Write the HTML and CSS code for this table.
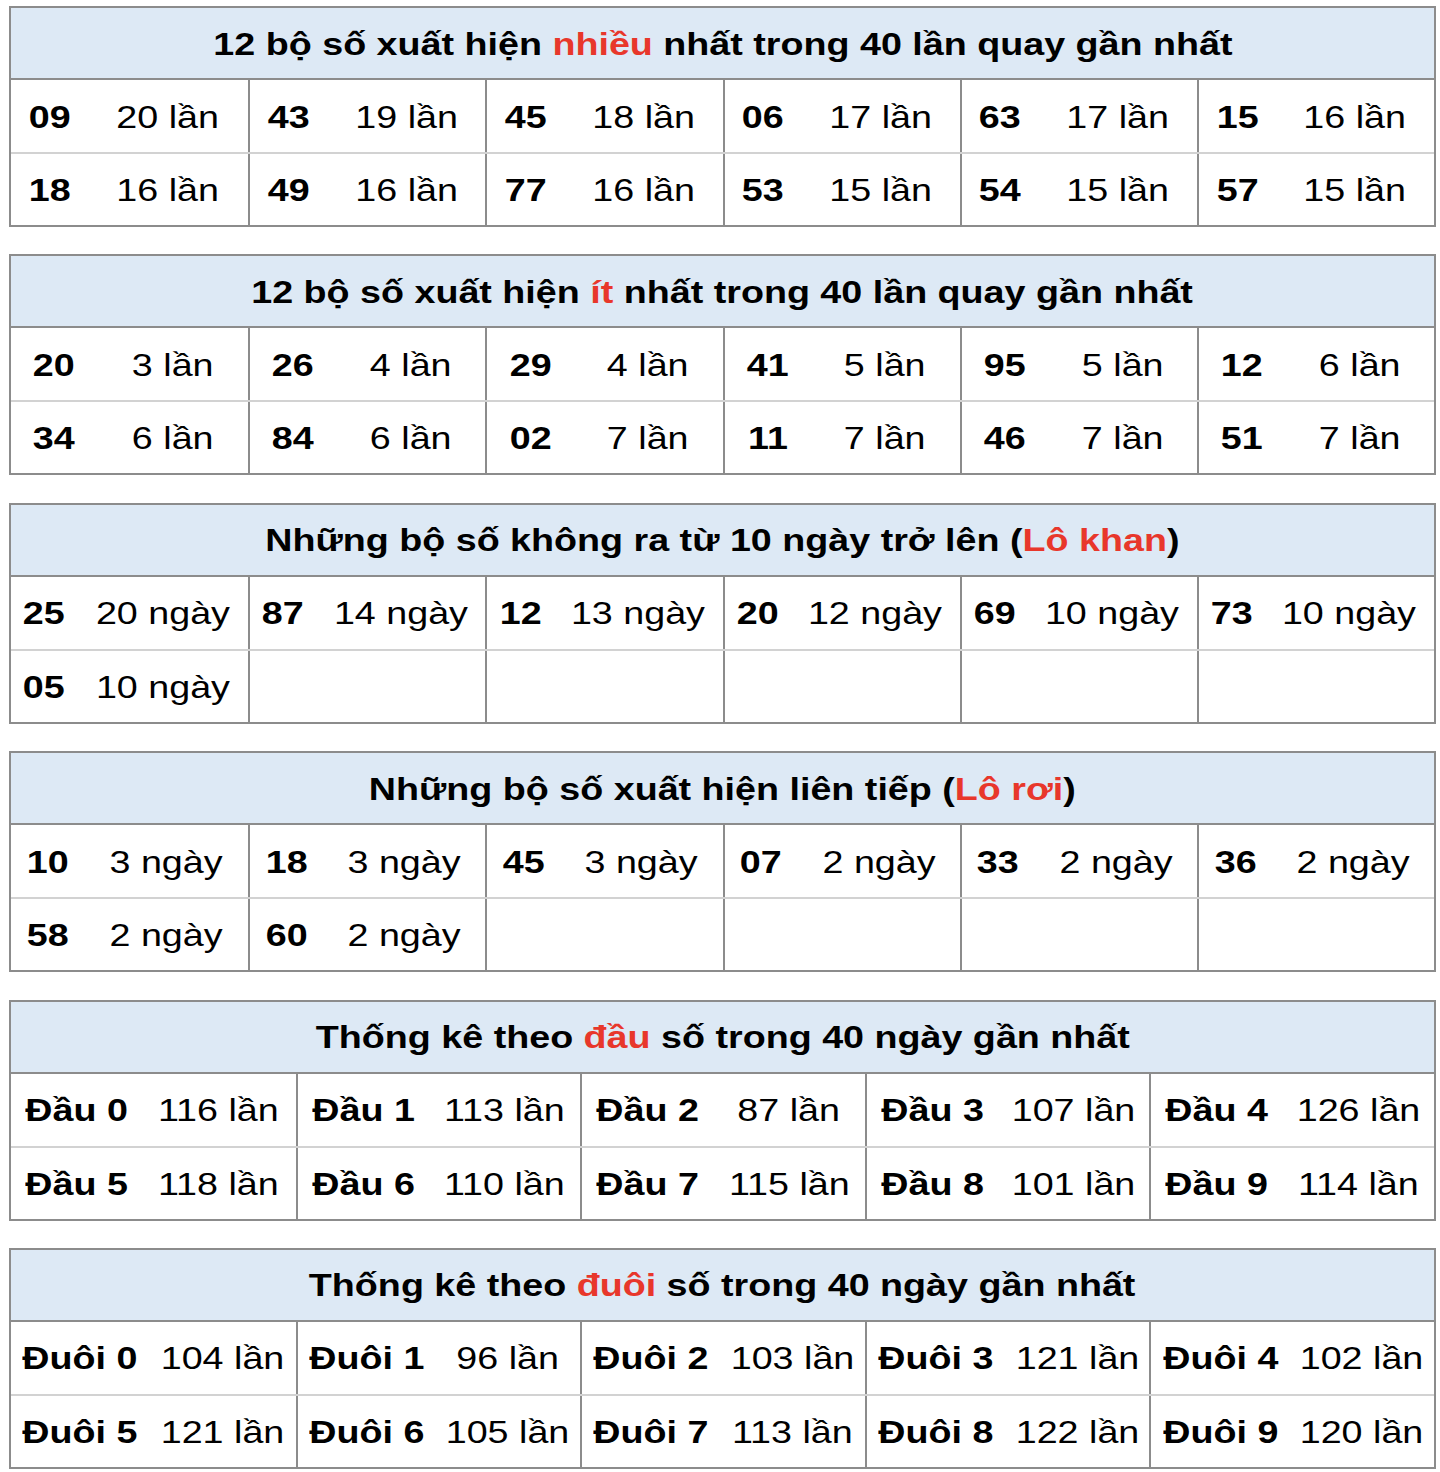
FILE: index.html
```html
<!DOCTYPE html>
<html lang="vi">
<head>
<meta charset="utf-8">
<title>Thống kê lô tô</title>
<link rel="stylesheet" href="styles.css">
</head>
<body>

<section class="stat stat--most">
  <div class="stat-head"><span class="txt">12 bộ số xuất hiện <b class="hl">nhiều</b> nhất trong 40 lần quay gần nhất</span></div>
  <div class="stat-row">
    <div class="pair"><div class="num"><span class="txt">09</span></div><div class="cnt"><span class="txt">20 lần</span></div></div>
    <div class="pair"><div class="num"><span class="txt">43</span></div><div class="cnt"><span class="txt">19 lần</span></div></div>
    <div class="pair"><div class="num"><span class="txt">45</span></div><div class="cnt"><span class="txt">18 lần</span></div></div>
    <div class="pair"><div class="num"><span class="txt">06</span></div><div class="cnt"><span class="txt">17 lần</span></div></div>
    <div class="pair"><div class="num"><span class="txt">63</span></div><div class="cnt"><span class="txt">17 lần</span></div></div>
    <div class="pair"><div class="num"><span class="txt">15</span></div><div class="cnt"><span class="txt">16 lần</span></div></div>
  </div>
  <div class="stat-row">
    <div class="pair"><div class="num"><span class="txt">18</span></div><div class="cnt"><span class="txt">16 lần</span></div></div>
    <div class="pair"><div class="num"><span class="txt">49</span></div><div class="cnt"><span class="txt">16 lần</span></div></div>
    <div class="pair"><div class="num"><span class="txt">77</span></div><div class="cnt"><span class="txt">16 lần</span></div></div>
    <div class="pair"><div class="num"><span class="txt">53</span></div><div class="cnt"><span class="txt">15 lần</span></div></div>
    <div class="pair"><div class="num"><span class="txt">54</span></div><div class="cnt"><span class="txt">15 lần</span></div></div>
    <div class="pair"><div class="num"><span class="txt">57</span></div><div class="cnt"><span class="txt">15 lần</span></div></div>
  </div>
</section>

<section class="stat stat--least">
  <div class="stat-head"><span class="txt">12 bộ số xuất hiện <b class="hl">ít</b> nhất trong 40 lần quay gần nhất</span></div>
  <div class="stat-row">
    <div class="pair"><div class="num"><span class="txt">20</span></div><div class="cnt"><span class="txt">3 lần</span></div></div>
    <div class="pair"><div class="num"><span class="txt">26</span></div><div class="cnt"><span class="txt">4 lần</span></div></div>
    <div class="pair"><div class="num"><span class="txt">29</span></div><div class="cnt"><span class="txt">4 lần</span></div></div>
    <div class="pair"><div class="num"><span class="txt">41</span></div><div class="cnt"><span class="txt">5 lần</span></div></div>
    <div class="pair"><div class="num"><span class="txt">95</span></div><div class="cnt"><span class="txt">5 lần</span></div></div>
    <div class="pair"><div class="num"><span class="txt">12</span></div><div class="cnt"><span class="txt">6 lần</span></div></div>
  </div>
  <div class="stat-row">
    <div class="pair"><div class="num"><span class="txt">34</span></div><div class="cnt"><span class="txt">6 lần</span></div></div>
    <div class="pair"><div class="num"><span class="txt">84</span></div><div class="cnt"><span class="txt">6 lần</span></div></div>
    <div class="pair"><div class="num"><span class="txt">02</span></div><div class="cnt"><span class="txt">7 lần</span></div></div>
    <div class="pair"><div class="num"><span class="txt">11</span></div><div class="cnt"><span class="txt">7 lần</span></div></div>
    <div class="pair"><div class="num"><span class="txt">46</span></div><div class="cnt"><span class="txt">7 lần</span></div></div>
    <div class="pair"><div class="num"><span class="txt">51</span></div><div class="cnt"><span class="txt">7 lần</span></div></div>
  </div>
</section>

<section class="stat stat--khan">
  <div class="stat-head"><span class="txt">Những bộ số không ra từ 10 ngày trở lên (<b class="hl">Lô khan</b>)</span></div>
  <div class="stat-row">
    <div class="pair"><div class="num"><span class="txt">25</span></div><div class="cnt"><span class="txt">20 ngày</span></div></div>
    <div class="pair"><div class="num"><span class="txt">87</span></div><div class="cnt"><span class="txt">14 ngày</span></div></div>
    <div class="pair"><div class="num"><span class="txt">12</span></div><div class="cnt"><span class="txt">13 ngày</span></div></div>
    <div class="pair"><div class="num"><span class="txt">20</span></div><div class="cnt"><span class="txt">12 ngày</span></div></div>
    <div class="pair"><div class="num"><span class="txt">69</span></div><div class="cnt"><span class="txt">10 ngày</span></div></div>
    <div class="pair"><div class="num"><span class="txt">73</span></div><div class="cnt"><span class="txt">10 ngày</span></div></div>
  </div>
  <div class="stat-row">
    <div class="pair"><div class="num"><span class="txt">05</span></div><div class="cnt"><span class="txt">10 ngày</span></div></div>
    <div class="pair"><div class="num"></div><div class="cnt"></div></div>
    <div class="pair"><div class="num"></div><div class="cnt"></div></div>
    <div class="pair"><div class="num"></div><div class="cnt"></div></div>
    <div class="pair"><div class="num"></div><div class="cnt"></div></div>
    <div class="pair"><div class="num"></div><div class="cnt"></div></div>
  </div>
</section>

<section class="stat stat--roi">
  <div class="stat-head"><span class="txt">Những bộ số xuất hiện liên tiếp (<b class="hl">Lô rơi</b>)</span></div>
  <div class="stat-row">
    <div class="pair"><div class="num"><span class="txt">10</span></div><div class="cnt"><span class="txt">3 ngày</span></div></div>
    <div class="pair"><div class="num"><span class="txt">18</span></div><div class="cnt"><span class="txt">3 ngày</span></div></div>
    <div class="pair"><div class="num"><span class="txt">45</span></div><div class="cnt"><span class="txt">3 ngày</span></div></div>
    <div class="pair"><div class="num"><span class="txt">07</span></div><div class="cnt"><span class="txt">2 ngày</span></div></div>
    <div class="pair"><div class="num"><span class="txt">33</span></div><div class="cnt"><span class="txt">2 ngày</span></div></div>
    <div class="pair"><div class="num"><span class="txt">36</span></div><div class="cnt"><span class="txt">2 ngày</span></div></div>
  </div>
  <div class="stat-row">
    <div class="pair"><div class="num"><span class="txt">58</span></div><div class="cnt"><span class="txt">2 ngày</span></div></div>
    <div class="pair"><div class="num"><span class="txt">60</span></div><div class="cnt"><span class="txt">2 ngày</span></div></div>
    <div class="pair"><div class="num"></div><div class="cnt"></div></div>
    <div class="pair"><div class="num"></div><div class="cnt"></div></div>
    <div class="pair"><div class="num"></div><div class="cnt"></div></div>
    <div class="pair"><div class="num"></div><div class="cnt"></div></div>
  </div>
</section>

<section class="stat stat--dau">
  <div class="stat-head"><span class="txt">Thống kê theo <b class="hl">đầu</b> số trong 40 ngày gần nhất</span></div>
  <div class="stat-row">
    <div class="pair"><div class="num"><span class="txt">Đầu 0</span></div><div class="cnt"><span class="txt">116 lần</span></div></div>
    <div class="pair"><div class="num"><span class="txt">Đầu 1</span></div><div class="cnt"><span class="txt">113 lần</span></div></div>
    <div class="pair"><div class="num"><span class="txt">Đầu 2</span></div><div class="cnt"><span class="txt">87 lần</span></div></div>
    <div class="pair"><div class="num"><span class="txt">Đầu 3</span></div><div class="cnt"><span class="txt">107 lần</span></div></div>
    <div class="pair"><div class="num"><span class="txt">Đầu 4</span></div><div class="cnt"><span class="txt">126 lần</span></div></div>
  </div>
  <div class="stat-row">
    <div class="pair"><div class="num"><span class="txt">Đầu 5</span></div><div class="cnt"><span class="txt">118 lần</span></div></div>
    <div class="pair"><div class="num"><span class="txt">Đầu 6</span></div><div class="cnt"><span class="txt">110 lần</span></div></div>
    <div class="pair"><div class="num"><span class="txt">Đầu 7</span></div><div class="cnt"><span class="txt">115 lần</span></div></div>
    <div class="pair"><div class="num"><span class="txt">Đầu 8</span></div><div class="cnt"><span class="txt">101 lần</span></div></div>
    <div class="pair"><div class="num"><span class="txt">Đầu 9</span></div><div class="cnt"><span class="txt">114 lần</span></div></div>
  </div>
</section>

<section class="stat stat--duoi">
  <div class="stat-head"><span class="txt">Thống kê theo <b class="hl">đuôi</b> số trong 40 ngày gần nhất</span></div>
  <div class="stat-row">
    <div class="pair"><div class="num"><span class="txt">Đuôi 0</span></div><div class="cnt"><span class="txt">104 lần</span></div></div>
    <div class="pair"><div class="num"><span class="txt">Đuôi 1</span></div><div class="cnt"><span class="txt">96 lần</span></div></div>
    <div class="pair"><div class="num"><span class="txt">Đuôi 2</span></div><div class="cnt"><span class="txt">103 lần</span></div></div>
    <div class="pair"><div class="num"><span class="txt">Đuôi 3</span></div><div class="cnt"><span class="txt">121 lần</span></div></div>
    <div class="pair"><div class="num"><span class="txt">Đuôi 4</span></div><div class="cnt"><span class="txt">102 lần</span></div></div>
  </div>
  <div class="stat-row">
    <div class="pair"><div class="num"><span class="txt">Đuôi 5</span></div><div class="cnt"><span class="txt">121 lần</span></div></div>
    <div class="pair"><div class="num"><span class="txt">Đuôi 6</span></div><div class="cnt"><span class="txt">105 lần</span></div></div>
    <div class="pair"><div class="num"><span class="txt">Đuôi 7</span></div><div class="cnt"><span class="txt">113 lần</span></div></div>
    <div class="pair"><div class="num"><span class="txt">Đuôi 8</span></div><div class="cnt"><span class="txt">122 lần</span></div></div>
    <div class="pair"><div class="num"><span class="txt">Đuôi 9</span></div><div class="cnt"><span class="txt">120 lần</span></div></div>
  </div>
</section>

</body>
</html>
```

FILE: styles.css
```css
* {
  box-sizing: border-box;
}

html, body {
  background: #ffffff;
}

body {
  margin: 0;
  padding: 6px 0 0 9px;
  font-family: "Liberation Sans", Arial, Helvetica, sans-serif;
  font-size: 32px;
  color: #000000;
}

.stat {
  width: 1427px;
  border: 2px solid #8c8c8c;
  margin-bottom: 27.4px;
  background: #ffffff;
}

.stat-head {
  height: 72px;
  padding-top: 1px;
  background: #dde9f5;
  border-bottom: 2px solid #8c8c8c;
  display: flex;
  align-items: center;
  justify-content: center;
  font-weight: bold;
}

.txt {
  display: inline-block;
  white-space: nowrap;
  transform: scaleX(1.177);
  line-height: 1;
}

.hl {
  color: #e8372b;
  font-weight: bold;
}

.stat-row {
  display: grid;
  grid-template-columns: repeat(6, 1fr);
  height: 72px;
  padding-top: 1px;
}

.stat-row + .stat-row {
  height: 73px;
  border-top: 2px solid #d2d2d2;
}

.stat--dau .stat-row,
.stat--duoi .stat-row {
  grid-template-columns: repeat(5, 1fr);
}

.pair {
  display: grid;
  min-width: 0;
  margin-top: -1px;
}

.pair + .pair {
  border-left: 2px solid #8c8c8c;
}

.num,
.cnt {
  display: flex;
  align-items: center;
  justify-content: center;
  min-width: 0;
  padding-top: 1px;
}

.num {
  font-weight: bold;
}

.stat--most .pair {
  grid-template-columns: 77px 1fr;
}

.stat--least .pair {
  grid-template-columns: 86px 1fr;
}

.stat--khan .pair {
  grid-template-columns: 66px 1fr;
}

.stat--roi .pair {
  grid-template-columns: 73px 1fr;
}

.stat--dau .pair {
  grid-template-columns: 131px 1fr;
}

.stat--duoi .pair {
  grid-template-columns: 138px 1fr;
}
```
